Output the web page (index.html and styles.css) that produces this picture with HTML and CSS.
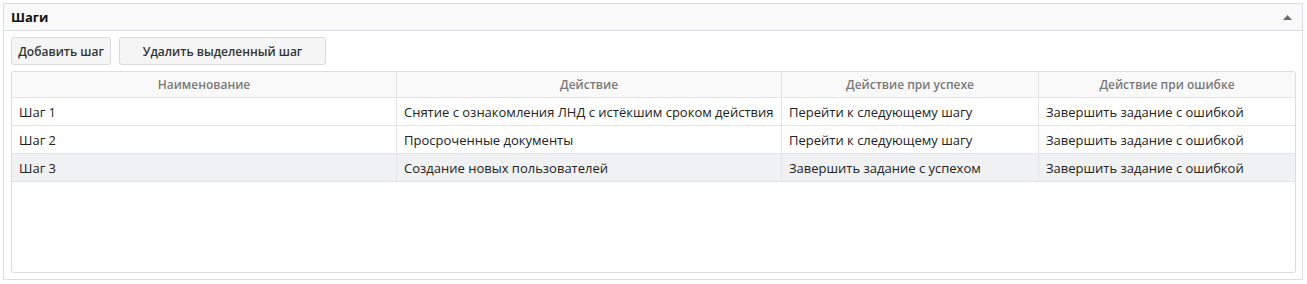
FILE: index.html
```html
<!DOCTYPE html>
<html lang="ru">
<head>
<meta charset="utf-8">
<title>Шаги</title>
<link rel="stylesheet" href="styles.css">
</head>
<body>
<div class="panel">
  <div class="panel-header">
    <span class="panel-title">Шаги</span>
    <svg class="collapse" width="9" height="5" viewBox="0 0 9 5"><polygon points="0,5 4.5,0 9,5" fill="#6b6b6b"/></svg>
  </div>
  <div class="panel-body">
    <div class="toolbar">
      <button class="btn btn-add">Добавить шаг</button>
      <button class="btn btn-del">Удалить выделенный шаг</button>
    </div>
    <div class="grid">
      <div class="row head">
        <div class="cell c1">Наименование</div>
        <div class="cell c2">Действие</div>
        <div class="cell c3">Действие при успехе</div>
        <div class="cell c4">Действие при ошибке</div>
      </div>
      <div class="row">
        <div class="cell c1">Шаг 1</div>
        <div class="cell c2">Снятие с ознакомления ЛНД с истёкшим сроком действия</div>
        <div class="cell c3">Перейти к следующему шагу</div>
        <div class="cell c4">Завершить задание с ошибкой</div>
      </div>
      <div class="row">
        <div class="cell c1">Шаг 2</div>
        <div class="cell c2">Просроченные документы</div>
        <div class="cell c3">Перейти к следующему шагу</div>
        <div class="cell c4">Завершить задание с ошибкой</div>
      </div>
      <div class="row selected">
        <div class="cell c1">Шаг 3</div>
        <div class="cell c2">Создание новых пользователей</div>
        <div class="cell c3">Завершить задание с успехом</div>
        <div class="cell c4">Завершить задание с ошибкой</div>
      </div>
    </div>
  </div>
</div>
</body>
</html>
```
FILE: styles.css
```css
html, body {
  margin: 0;
  padding: 0;
  background: #ffffff;
}
body {
  font-family: "Open Sans", "Noto Sans", sans-serif;
  font-size: 13px;
  color: #222;
}
.panel {
  margin: 3px 0 0 3px;
  width: 1298px;
  height: 275px;
  border: 1px solid #dcdce4;
  display: flex;
  flex-direction: column;
}
.panel-header {
  height: 27px;
  background: #f9f9f9;
  border-bottom: 1px solid #dcdce4;
  display: flex;
  align-items: center;
  justify-content: space-between;
  padding: 0 10px 0 7px;
  box-sizing: border-box;
  flex: none;
}
.panel-title {
  font-weight: 700;
  font-size: 13px;
  color: #111;
  line-height: 1;
  margin-top: 1px;
}
.collapse {
  display: block;
  margin-top: 1px;
}
.panel-body {
  flex: 1;
  padding: 6px 6px 6px 7px;
  display: flex;
  flex-direction: column;
  gap: 6px;
  min-height: 0;
}
.toolbar {
  display: flex;
  gap: 8px;
  height: 28px;
  flex: none;
}
.btn {
  font-family: "Open Sans", "Noto Sans", sans-serif;
  font-size: 12px;
  font-weight: 600;
  color: #333;
  background: #f5f5f5;
  border: 1px solid #dadada;
  border-radius: 3px;
  height: 28px;
  padding: 0;
  margin: 0;
}
.btn-add { width: 100px; }
.btn-del { width: 207px; }
.grid {
  flex: 1;
  border: 1px solid #dcdce4;
  border-radius: 3px;
  overflow: hidden;
  min-height: 0;
}
.row {
  display: grid;
  grid-template-columns: 385px 385px 257px 1fr;
  height: 28px;
  border-bottom: 1px solid #e4e4e6;
  box-sizing: border-box;
}
.row.head {
  height: 26px;
  background: #f9f9f9;
  color: #7a7a7a;
  font-size: 12px;
  font-weight: 600;
}
.row.selected {
  background: #f0f1f3;
}
.cell {
  display: flex;
  align-items: center;
  padding: 0 7px;
  border-right: 1px solid #e4e4e6;
  white-space: nowrap;
  overflow: hidden;
}
.cell.c4 { border-right: none; }
.head .cell {
  justify-content: center;
}
```
